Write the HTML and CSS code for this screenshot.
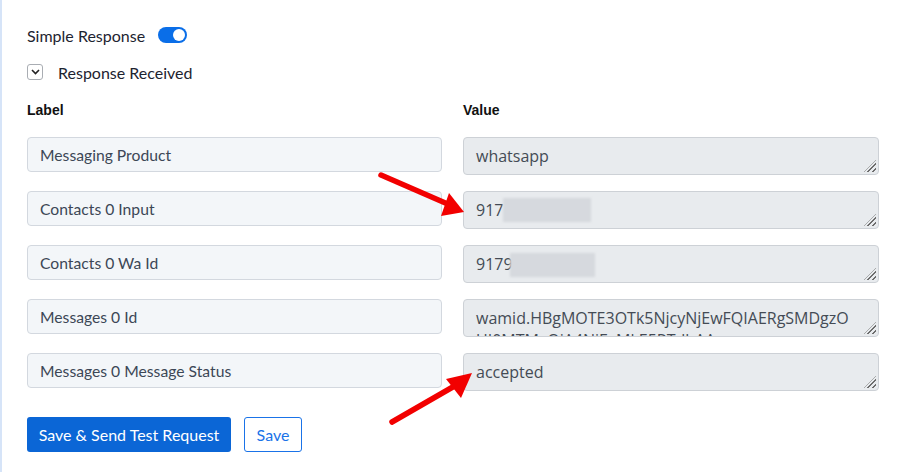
FILE: index.html
```html
<!DOCTYPE html>
<html lang="en">
<head>
  <meta charset="UTF-8">
  <meta name="viewport" content="width=device-width, initial-scale=1.0">
  <title>Response Mapping</title>
  <link rel="stylesheet" href="styles.css">
</head>
<body>
  <div class="panel">
    <div class="toggle-row">
      <span>Simple Response</span>
      <span class="switch"><span class="knob"></span></span>
    </div>

    <div class="collapse-row">
      <span class="chev-box">
        <svg width="9" height="6" viewBox="0 0 9 6"><path d="M1 1l3.5 3.5L8 1" fill="none" stroke="#222" stroke-width="1.6"/></svg>
      </span>
      <span>Response Received</span>
    </div>

    <div class="fields">
      <div class="col-head">Label</div>
      <div class="col-head">Value</div>

      <div class="label-box">Messaging Product</div>
      <div class="value-box">whatsapp</div>

      <div class="label-box">Contacts 0 Input</div>
      <div class="value-box">917<span class="masked m1"></span></div>

      <div class="label-box">Contacts 0 Wa Id</div>
      <div class="value-box">9179<span class="masked m2"></span></div>

      <div class="label-box">Messages 0 Id</div>
      <div class="value-box wrap">wamid.HBgMOTE3OTk5NjcyNjEwFQIAERgSMDgzOUI0MTMxQjA4NjEyMkE5RTdhAA==</div>

      <div class="label-box">Messages 0 Message Status</div>
      <div class="value-box">accepted</div>
    </div>

    <div class="actions">
      <button class="btn btn-primary">Save &amp; Send Test Request</button>
      <button class="btn btn-outline">Save</button>
    </div>

    <!-- red callout arrows -->
    <svg class="callouts" width="904" height="472" viewBox="0 0 904 472">
      <line x1="381" y1="175" x2="450" y2="205" stroke="#f20000" stroke-width="5.5" stroke-linecap="round"/>
      <polygon points="464,212 449,193 441,216" fill="#f20000"/>
      <line x1="392" y1="422" x2="458" y2="384" stroke="#f20000" stroke-width="5.5" stroke-linecap="round"/>
      <polygon points="472,373 446,379 461,398" fill="#f20000"/>
    </svg>
  </div>
</body>
</html>
```

FILE: styles.css
```css
body {
  margin: 0;
  background-color: #fff;
  font-family: Lato, "Noto Sans", sans-serif;
  color: #1d2330;
}

.panel {
  position: relative;
  min-height: 472px;
  box-sizing: border-box;
  border-left: 2px solid #d6e4f8;
  padding: 26px 25px 0 25px;
}

.toggle-row {
  display: flex;
  align-items: center;
  gap: 13px;
  height: 18px;
  font-size: 16px;
}

.switch {
  position: relative;
  width: 29px;
  height: 16px;
  border-radius: 8px;
  background-color: #0a6ee8;
}

.switch .knob {
  position: absolute;
  top: 2px;
  right: 2px;
  width: 12px;
  height: 12px;
  border-radius: 50%;
  background-color: #fff;
}

.collapse-row {
  display: flex;
  align-items: center;
  gap: 15px;
  margin-top: 20px;
  height: 16px;
  font-size: 16px;
}

.chev-box {
  display: flex;
  align-items: center;
  justify-content: center;
  width: 14px;
  height: 14px;
  border: 1px solid #a9adb3;
  border-radius: 3px;
}

.fields {
  display: grid;
  grid-template-columns: 415px 416px;
  column-gap: 21px;
  row-gap: 16px;
  margin-top: 21px;
  align-items: start;
}

.col-head {
  font-family: "Liberation Sans", Arial, sans-serif;
  font-weight: bold;
  font-size: 14px;
  line-height: 18px;
  margin-bottom: 2px;
  color: #111;
}

.label-box {
  box-sizing: border-box;
  height: 35px;
  padding: 0 12px;
  line-height: 34px;
  font-size: 15.7px;
  color: #3c4756;
  background-color: #f3f6f9;
  border: 1px solid #d3d8df;
  border-radius: 4px;
}

.value-box {
  position: relative;
  box-sizing: border-box;
  height: 38px;
  padding: 7px 12px 0 12px;
  overflow: hidden;
  font-family: "Open Sans", "Noto Sans", sans-serif;
  font-size: 16px;
  line-height: 22px;
  color: #444b55;
  background-color: #e8ebee;
  border: 1px solid #cdd1d6;
  border-radius: 4px;
  white-space: nowrap;
}

.value-box.wrap {
  white-space: normal;
  word-break: break-all;
  padding-right: 22px;
}

/* resize grip in the corner */
.value-box::after {
  content: "";
  position: absolute;
  right: 2px;
  bottom: 2px;
  width: 12px;
  height: 12px;
  background: repeating-linear-gradient(135deg, transparent 0 1.6px, #6d6d6d 1.6px 3px);
  clip-path: polygon(100% 0, 100% 100%, 0 100%);
}

.masked {
  display: inline-block;
  vertical-align: middle;
  height: 24px;
  background-color: #d6d9de;
  filter: blur(1px);
}

.m1 {
  width: 88px;
  margin-top: -4px;
}

.m2 {
  width: 85px;
  margin-left: -3px;
  margin-top: -2px;
}

.actions {
  display: flex;
  gap: 13px;
  margin-top: 26px;
}

.btn {
  height: 35px;
  padding: 0 10px;
  font-family: Lato, "Noto Sans", sans-serif;
  font-size: 16px;
  border-radius: 3px;
  cursor: pointer;
}

.btn-primary {
  width: 204px;
  background-color: #0b66d6;
  color: #fff;
  border: none;
}

.btn-outline {
  width: 58px;
  background-color: #fff;
  color: #1a73e8;
  border: 1px solid #1a73e8;
}

.callouts {
  position: absolute;
  top: 0;
  left: -2px;
  pointer-events: none;
}
```
